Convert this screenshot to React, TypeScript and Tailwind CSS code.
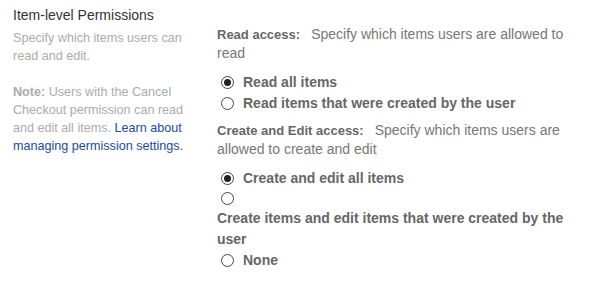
import { useState } from 'react';

function Radio({ checked, onClick }: { checked: boolean; onClick: () => void }) {
  return (
    <span
      onClick={onClick}
      className="inline-flex h-[13px] w-[13px] shrink-0 cursor-pointer items-center justify-center rounded-full border border-[#444] bg-white"
    >
      {checked && <span className="h-[7px] w-[7px] rounded-full bg-[#222]" />}
    </span>
  );
}

export default function App() {
  const [read, setRead] = useState('all');
  const [edit, setEdit] = useState('all');

  return (
    <div className="flex h-[287px] w-[595px] bg-white font-['Liberation_Sans',Arial,sans-serif]">
      <div className="w-[217px] shrink-0 pl-[13px] pt-[5px]">
        <h2 className="text-[14px] leading-[20px] text-[#333]">Item-level Permissions</h2>
        <p className="mt-[4px] w-[178px] text-[12.6px] leading-[18px] text-[#ababab]">
          Specify which items users can read and edit.
        </p>
        <p className="mt-[18px] w-[178px] text-[12.6px] leading-[18px] text-[#ababab]">
          <b>Note:</b> Users with the Cancel Checkout permission can read and edit all items.{' '}
          <a href="#" className="text-[#1b4aa0]">
            Learn about managing permission settings.
          </a>
        </p>
      </div>
      <div className="w-[365px] pt-[25px] text-[14px] text-[#666]">
        <p className="leading-[19px]">
          <b className="text-[13px] text-[#666]">Read access:</b>
          <span className="ml-[11px] text-[#777]">Specify which items users are allowed to read</span>
        </p>
        <div className="mt-[9px] flex flex-col font-bold">
          <label className="flex h-[21px] items-center gap-[9px] pl-[4px]">
            <Radio checked={read === 'all'} onClick={() => setRead('all')} />
            Read all items
          </label>
          <label className="flex h-[21px] items-center gap-[9px] pl-[4px]">
            <Radio checked={read === 'own'} onClick={() => setRead('own')} />
            Read items that were created by the user
          </label>
        </div>
        <p className="mt-[7px] leading-[19px]">
          <b className="text-[13px] text-[#666]">Create and Edit access:</b>
          <span className="ml-[11px] text-[#777]">Specify which items users are allowed to create and edit</span>
        </p>
        <div className="mt-[9px] flex flex-col font-bold">
          <label className="flex h-[21px] items-center gap-[9px] pl-[4px]">
            <Radio checked={edit === 'all'} onClick={() => setEdit('all')} />
            Create and edit all items
          </label>
          <div className="flex h-[19px] items-center pl-[4px]">
            <Radio checked={edit === 'own'} onClick={() => setEdit('own')} />
          </div>
          <p className="leading-[21px]">Create items and edit items that were created by the user</p>
          <label className="flex h-[21px] items-center gap-[9px] pl-[4px]">
            <Radio checked={edit === 'none'} onClick={() => setEdit('none')} />
            None
          </label>
        </div>
      </div>
    </div>
  );
}
